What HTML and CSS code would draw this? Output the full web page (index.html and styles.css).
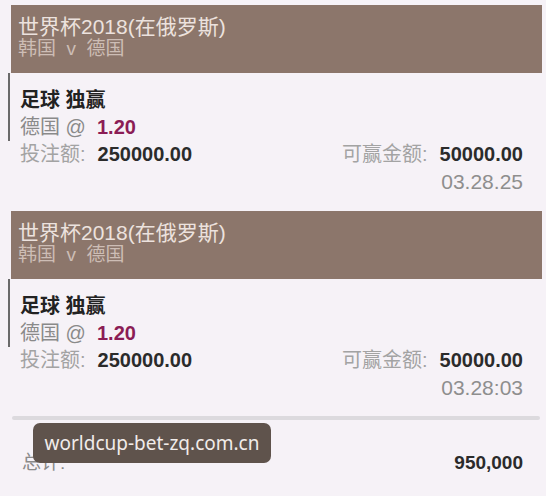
FILE: index.html
```html
<!DOCTYPE html>
<html lang="zh-CN">
<head>
    <meta charset="UTF-8" />
    <meta name="viewport" content="width=device-width, initial-scale=1.0"/>
    <title>投注记录</title>
    <link rel="stylesheet" href="styles.css">
</head>
<body>
    <div class="page">
        <div class="card">
            <div class="card-head">
                <div class="event">世界杯2018(在俄罗斯)</div>
                <div class="teams">韩国&nbsp;&nbsp;v&nbsp;&nbsp;德国</div>
            </div>
            <div class="pick">
                <div class="market">足球 独赢</div>
                <div class="selection">德国 @ &nbsp;<span class="odds">1.20</span></div>
            </div>
            <div class="amounts">
                <div><span class="label">投注额:</span><span class="value">250000.00</span></div>
                <div><span class="label">可赢金额:</span><span class="value">50000.00</span></div>
            </div>
            <div class="time">03.28.25</div>
        </div>

        <div class="card">
            <div class="card-head">
                <div class="event">世界杯2018(在俄罗斯)</div>
                <div class="teams">韩国&nbsp;&nbsp;v&nbsp;&nbsp;德国</div>
            </div>
            <div class="pick">
                <div class="market">足球 独赢</div>
                <div class="selection">德国 @ &nbsp;<span class="odds">1.20</span></div>
            </div>
            <div class="amounts">
                <div><span class="label">投注额:</span><span class="value">250000.00</span></div>
                <div><span class="label">可赢金额:</span><span class="value">50000.00</span></div>
            </div>
            <div class="time">03.28:03</div>
        </div>

        <div class="divider"></div>

        <div class="total">
            <span class="label">总计:</span>
            <span class="value">950,000</span>
        </div>

        <div class="watermark">worldcup-bet-zq.com.cn</div>
    </div>
</body>
</html>
```

FILE: styles.css
```css
body {
    margin: 0;
    background-color: #f6f2f7;
    font-family: 'Liberation Sans', 'Noto Sans CJK SC', sans-serif;
    color: #2b2b2b;
}
.page {
    position: relative;
    padding-top: 5px;
    height: 491px;
    overflow: hidden;
}
.card {
    margin-bottom: 16px;
}
.card-head {
    margin-left: 11px;
    margin-right: 4px;
    height: 68px;
    box-sizing: border-box;
    padding: 11px 0 0 7px;
    background-color: #8c766b;
}
.event {
    font-size: 21px;
    line-height: 22px;
    color: #ece2de;
}
.teams {
    font-size: 19px;
    line-height: 22px;
    color: #cdbdb5;
}
.pick {
    margin-left: 8px;
    padding: 14px 0 0 10px;
    border-left: 2px solid #6a6a6a;
    font-size: 20px;
    line-height: 27px;
}
.market {
    font-weight: bold;
    color: #222;
}
.selection {
    color: #8a8a8a;
}
.odds {
    font-weight: bold;
    color: #8b1d55;
}
.amounts {
    display: flex;
    justify-content: space-between;
    padding: 0 23px 0 20px;
    font-size: 20px;
    line-height: 27px;
}
.label {
    color: #a3a3a3;
    margin-right: 12px;
}
.value {
    font-weight: bold;
    color: #2b2b2b;
}
.time {
    text-align: right;
    padding-right: 23px;
    font-size: 21px;
    line-height: 27px;
    color: #8e8e8e;
}
.divider {
    margin: -1px 6px 0 12px;
    height: 4px;
    border-radius: 2px;
    background-color: #dcdade;
}
.total {
    display: flex;
    justify-content: space-between;
    margin-top: 29px;
    padding: 0 23px 0 22px;
    font-size: 19px;
    line-height: 27px;
}
.total .label {
    color: #8a8a8a;
}
.watermark {
    position: absolute;
    left: 33px;
    top: 423px;
    width: 238px;
    height: 40px;
    box-sizing: border-box;
    border-radius: 7px;
    background-color: #5f534c;
    color: #f1ecea;
    font-family: 'Noto Sans', sans-serif;
    font-size: 19px;
    line-height: 40px;
    text-align: center;
}
```
